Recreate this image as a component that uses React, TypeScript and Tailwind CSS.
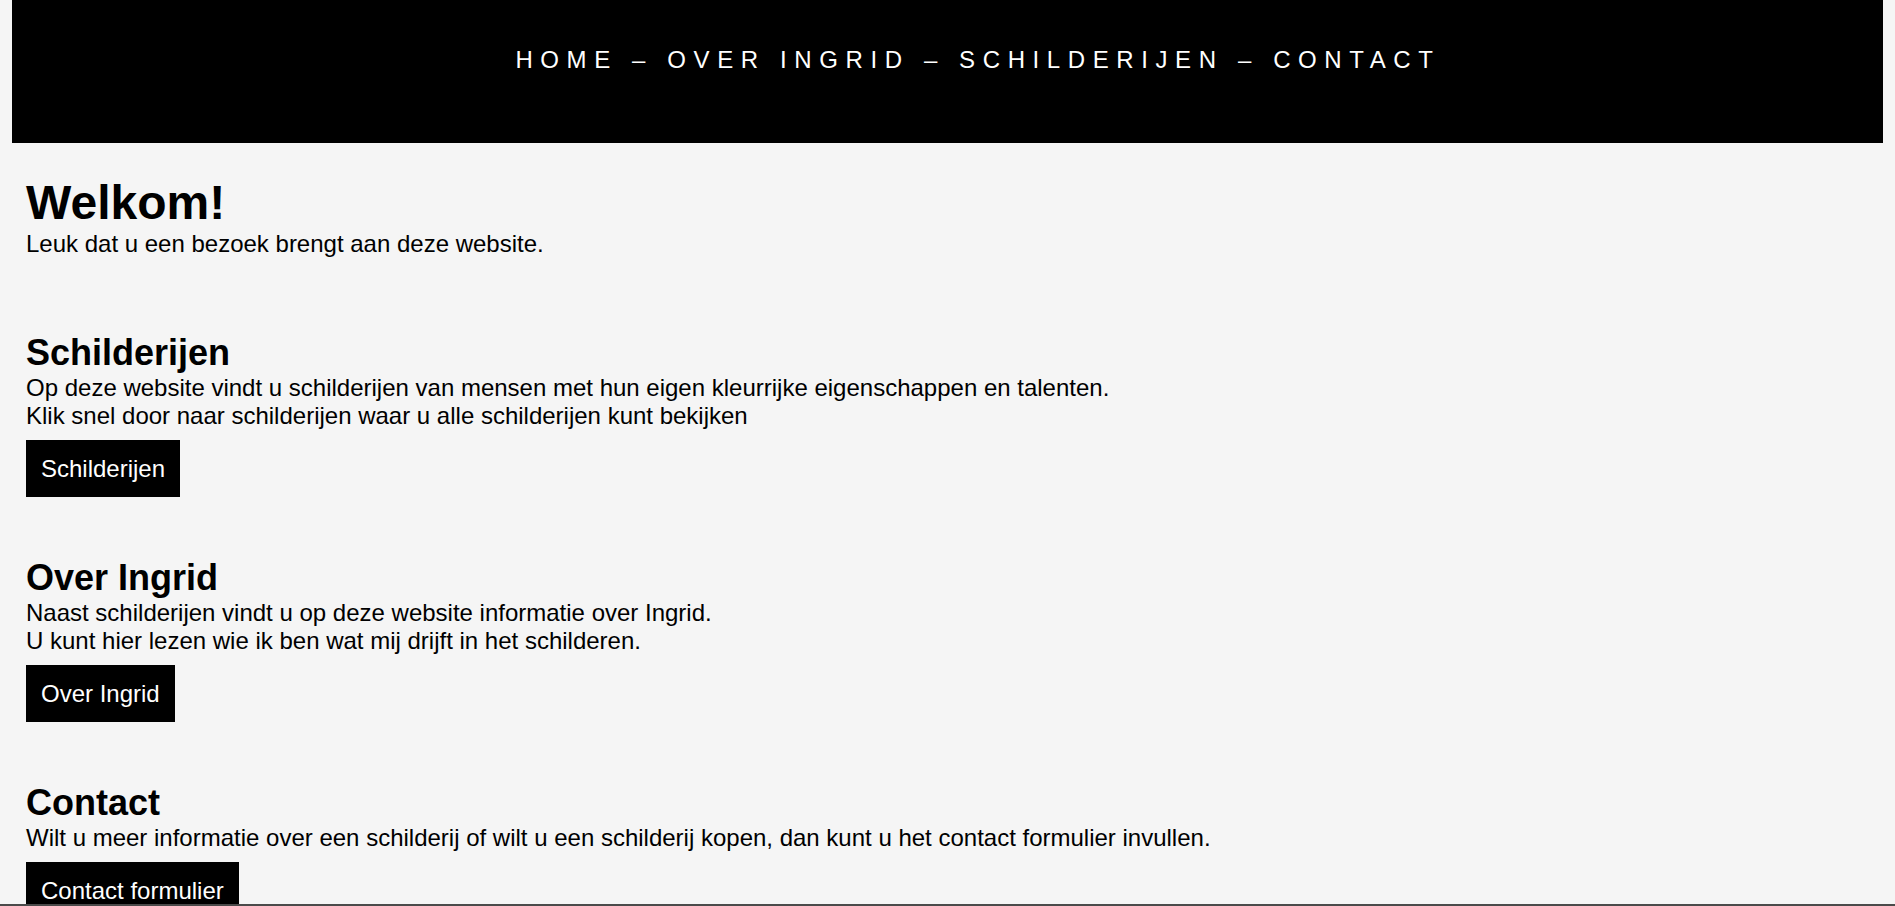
import React from 'react';

const navItems = ['Home', 'Over Ingrid', 'Schilderijen', 'Contact'];

const sections = [
  {
    title: 'Schilderijen',
    lines: [
      'Op deze website vindt u schilderijen van mensen met hun eigen kleurrijke eigenschappen en talenten.',
      'Klik snel door naar schilderijen waar u alle schilderijen kunt bekijken',
    ],
    button: 'Schilderijen',
  },
  {
    title: 'Over Ingrid',
    lines: [
      'Naast schilderijen vindt u op deze website informatie over Ingrid.',
      'U kunt hier lezen wie ik ben wat mij drijft in het schilderen.',
    ],
    button: 'Over Ingrid',
  },
  {
    title: 'Contact',
    lines: [
      'Wilt u meer informatie over een schilderij of wilt u een schilderij kopen, dan kunt u het contact formulier invullen.',
    ],
    button: 'Contact formulier',
  },
];

const App: React.FC = () => {
  return (
    <div className="h-screen overflow-hidden bg-[#f5f5f5] px-[12px] text-black font-['Liberation_Sans',Arial,sans-serif]">
      <header className="h-[143px] bg-black pt-[46px] pl-[61px]">
        <nav className="text-center text-[24px] leading-[27.5px] uppercase tracking-[7.6px] text-white">
          {navItems.map((item, i) => (
            <React.Fragment key={item}>
              {i > 0 && ' – '}
              <a href="#">{item}</a>
            </React.Fragment>
          ))}
        </nav>
      </header>

      <main className="pl-[14px]">
        <h1 className="mt-[34.4px] text-[48px] font-bold leading-[52.5px]">Welkom!</h1>
        <p className="text-[24px] leading-[27.5px]">Leuk dat u een bezoek brengt aan deze website.</p>

        {sections.map((s, i) => (
          <section key={s.title} className={i === 0 ? 'mt-[75px]' : 'mt-[60px]'}>
            <h2 className="text-[36px] font-bold leading-[42px]">{s.title}</h2>
            <p className="text-[24px] leading-[27.5px]">
              {s.lines.map((line, j) => (
                <React.Fragment key={j}>
                  {j > 0 && <br />}
                  {line}
                </React.Fragment>
              ))}
            </p>
            <a
              href="#"
              className="mt-[11px] inline-block bg-black px-[15px] py-[14.6px] text-[24px] leading-[27.5px] text-white"
            >
              {s.button}
            </a>
          </section>
        ))}
      </main>

      <div className="fixed inset-x-0 bottom-0 h-[2px] bg-[#4a4a4a]" />
    </div>
  );
};

export default App;
